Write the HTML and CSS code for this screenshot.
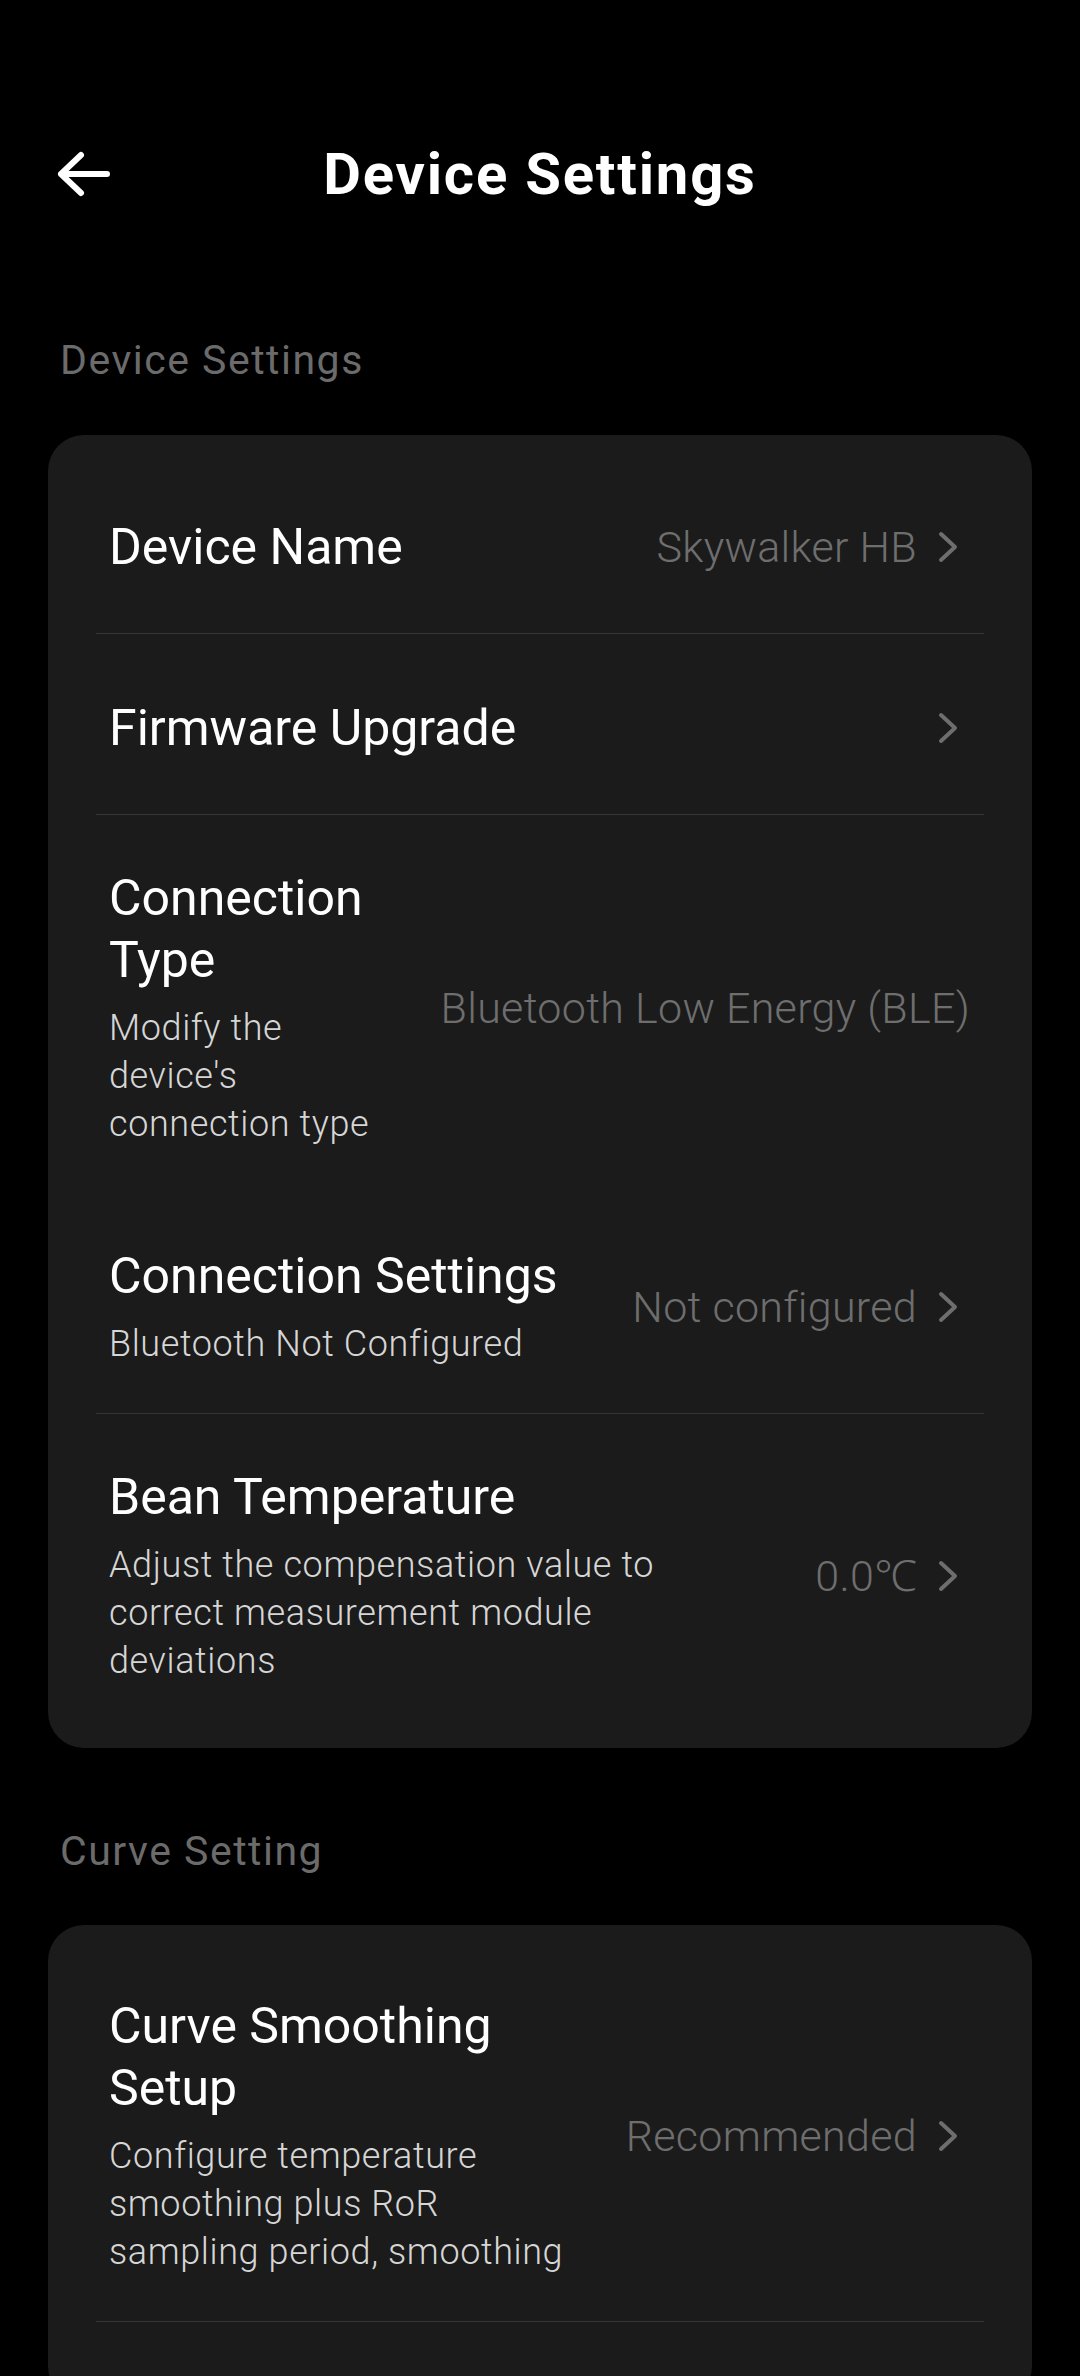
FILE: index.html
```html
<!DOCTYPE html>
<html lang="en">
<head>
<meta charset="utf-8">
<title>Device Settings</title>
<link rel="stylesheet" href="styles.css">
</head>
<body>
<div class="screen">
  <header class="topbar">
    <div class="back">
      <svg width="56" height="48" viewBox="0 0 56 48" fill="none" stroke="#fff" stroke-width="6" stroke-linecap="round" stroke-linejoin="round">
        <path d="M51 24 H5 M25 5 L5 24 L25 43"/>
      </svg>
    </div>
    <h1 class="title">Device Settings</h1>
    <div></div>
  </header>

  <section class="group">
    <h2 class="group-label">Device Settings</h2>
    <div class="card">
      <div class="row divided">
        <div class="row-text"><div class="row-title">Device Name</div></div>
        <div class="row-value">Skywalker HB<svg class="chev" width="20" height="32" viewBox="0 0 20 32" fill="none" stroke="#6e6e6e" stroke-width="4" stroke-linecap="round" stroke-linejoin="round"><path d="M3 3 L17 16 L3 29"/></svg></div>
      </div>
      <div class="row divided">
        <div class="row-text"><div class="row-title">Firmware Upgrade</div></div>
        <div class="row-value"><svg class="chev" width="20" height="32" viewBox="0 0 20 32" fill="none" stroke="#6e6e6e" stroke-width="4" stroke-linecap="round" stroke-linejoin="round"><path d="M3 3 L17 16 L3 29"/></svg></div>
      </div>
      <div class="row">
        <div class="row-text">
          <div class="row-title">Connection Type</div>
          <div class="row-sub">Modify the device's connection type</div>
        </div>
        <div class="row-value">Bluetooth Low Energy (BLE)</div>
      </div>
      <div class="row divided">
        <div class="row-text">
          <div class="row-title">Connection Settings</div>
          <div class="row-sub">Bluetooth Not Configured</div>
        </div>
        <div class="row-value">Not configured<svg class="chev" width="20" height="32" viewBox="0 0 20 32" fill="none" stroke="#6e6e6e" stroke-width="4" stroke-linecap="round" stroke-linejoin="round"><path d="M3 3 L17 16 L3 29"/></svg></div>
      </div>
      <div class="row">
        <div class="row-text">
          <div class="row-title">Bean Temperature</div>
          <div class="row-sub">Adjust the compensation value to correct measurement module deviations</div>
        </div>
        <div class="row-value">0.0℃<svg class="chev" width="20" height="32" viewBox="0 0 20 32" fill="none" stroke="#6e6e6e" stroke-width="4" stroke-linecap="round" stroke-linejoin="round"><path d="M3 3 L17 16 L3 29"/></svg></div>
      </div>
    </div>
  </section>

  <section class="group">
    <h2 class="group-label">Curve Setting</h2>
    <div class="card card-open">
      <div class="row divided">
        <div class="row-text">
          <div class="row-title">Curve Smoothing Setup</div>
          <div class="row-sub">Configure temperature smoothing plus RoR sampling period, smoothing</div>
        </div>
        <div class="row-value">Recommended<svg class="chev" width="20" height="32" viewBox="0 0 20 32" fill="none" stroke="#6e6e6e" stroke-width="4" stroke-linecap="round" stroke-linejoin="round"><path d="M3 3 L17 16 L3 29"/></svg></div>
      </div>
    </div>
  </section>
</div>
</body>
</html>
```

FILE: styles.css
```css
html, body {
  margin: 0;
  padding: 0;
  background: #000;
}

body {
  font-family: Roboto, "Noto Sans", "Liberation Sans", sans-serif;
  color: #fff;
}

.screen {
  width: 1080px;
  min-height: 2376px;
  overflow: hidden;
}

.topbar {
  display: grid;
  grid-template-columns: 1fr auto 1fr;
  align-items: center;
  height: 128px;
  margin-top: 110px;
}

.back {
  display: flex;
  padding-left: 56px;
}

.back svg {
  display: block;
}

.title {
  margin: 0;
  font-size: 58px;
  font-weight: 700;
  line-height: 1;
  letter-spacing: 1.8px;
}

.group-label {
  margin: 0;
  padding: 94px 0 0 60px;
  font-size: 41px;
  font-weight: 400;
  line-height: 56px;
  color: #6b6b6b;
  letter-spacing: 1.5px;
}

.group + .group .group-label {
  padding-top: 75px;
}

.card {
  margin: 47px 48px 0;
  padding: 18px 48px;
  background: #1b1b1b;
  border-radius: 36px;
}

.card-open {
  margin-top: 46px;
  padding-bottom: 80px;
}

.row {
  display: flex;
  align-items: center;
  gap: 56px;
  box-sizing: border-box;
  min-height: 181px;
  padding: 52px 14px 45px 13px;
}

.row.divided {
  border-bottom: 1px solid #363636;
}

.row-text {
  flex: 1;
  min-width: 0;
}

.row-title {
  font-size: 50px;
  line-height: 62px;
  font-weight: 400;
  color: #fff;
}

.row-sub {
  margin-top: 13px;
  font-size: 36px;
  line-height: 48px;
  font-weight: 300;
  color: #d6d6d6;
  letter-spacing: 0.6px;
}

.row-value {
  display: flex;
  align-items: center;
  flex-shrink: 0;
  font-size: 43px;
  line-height: 56px;
  font-weight: 300;
  color: #6e6e6e;
  letter-spacing: 0.3px;
}

.chev {
  display: block;
  margin-left: 21px;
  margin-right: 12px;
}
```
